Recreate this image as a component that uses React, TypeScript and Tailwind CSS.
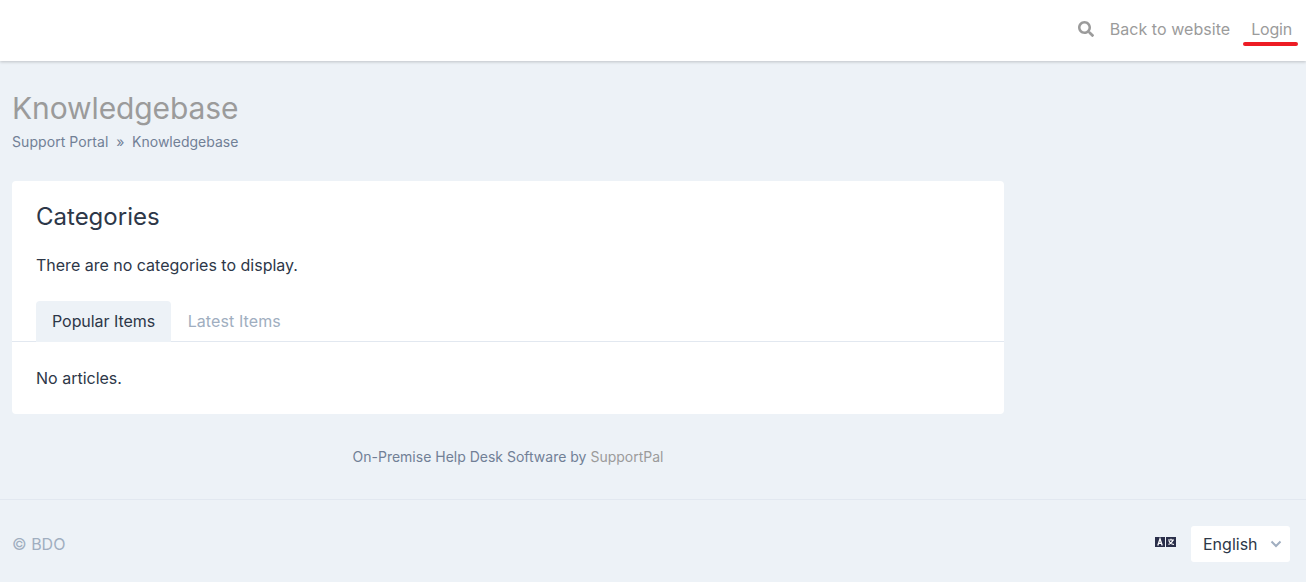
export default function App() {
  return (
    <div className="flex h-[582px] flex-col overflow-hidden bg-[#edf2f7] font-['Inter',sans-serif] text-[16px] text-[#2d3748]">
      <header className="flex h-[61px] flex-none items-center justify-end bg-white pr-[8px] pb-[4px] shadow-[0_1px_3px_rgba(0,0,0,0.2)]">
        <svg width="16" height="16" viewBox="0 0 512 512" fill="#9b9b9b" className="mr-[16px]">
          <path d="M505 442.7 405.3 343c-4.500-4.500-10.600-7-17-7H372c27.600-35.300 44-79.700 44-128C416 93.100 322.900 0 208 0S0 93.100 0 208s93.100 208 208 208c48.300 0 92.700-16.400 128-44v16.300c0 6.400 2.500 12.500 7 17l99.700 99.700c9.400 9.400 24.600 9.400 33.900 0l28.300-28.300c9.400-9.400 9.400-24.600.1-34zM208 336c-70.700 0-128-57.200-128-128 0-70.700 57.200-128 128-128 70.700 0 128 57.200 128 128 0 70.700-57.200 128-128 128z" />
        </svg>
        <a className="mr-[13px] tracking-[0.05px] text-[#9b9b9b]">Back to website</a>
        <a className="relative pr-[6px] pl-[8px] tracking-[-0.2px] text-[#9b9b9b]">
          Login
          <span className="absolute -bottom-[5px] left-0 right-0 h-[4px] rounded-full bg-[#ed1c24]" />
        </a>
      </header>

      <main className="flex-1 px-[12px]">
        <div className="w-[992px]">
          <h1 className="mt-[29px] text-[30px] leading-[36px] font-normal tracking-[-0.1px] text-[#9b9b9b]">Knowledgebase</h1>
          <div className="mt-[5px] flex h-[20px] items-center text-[14px] text-[#718096]">
            <span className="tracking-[0.07px]">Support Portal</span>
            <span className="mx-[7.75px]">»</span>
            <span>Knowledgebase</span>
          </div>

          <section className="mt-[30px] h-[233px] rounded-[4px] bg-white pt-[20px]">
            <h2 className="px-[24px] text-[24px] leading-[32px] font-normal">Categories</h2>
            <p className="mt-[20px] px-[24px] leading-[24px]">There are no categories to display.</p>
            <div className="mt-[24px] flex h-[41px] border-b border-[#e2e8f0] px-[24px]">
              <div className="flex h-[41px] items-center rounded-t-[4px] bg-[#edf2f7] px-[16px] pb-[2px] tracking-[-0.05px]">Popular Items</div>
              <div className="ml-[0.5px] flex h-[41px] items-center px-[16px] pb-[2px] tracking-[0.1px] text-[#a0aec0]">Latest Items</div>
            </div>
            <p className="mt-[24px] px-[24px] leading-[24px]">No articles.</p>
          </section>

          <div className="mt-[33px] text-center text-[14px] leading-[20px] text-[#718096]">
            On-Premise Help Desk Software by <span className="text-[#9b9b9b]">SupportPal</span>
          </div>
        </div>
      </main>

      <footer className="flex h-[83px] flex-none items-center justify-between border-t border-[#e2e8f0] pt-[6px] pr-[16px] pl-[12px]">
        <span className="text-[#a0aec0]">© BDO</span>
        <div className="flex items-center">
          <svg width="21" height="12" viewBox="0 0 21 12" className="mr-[15px] -translate-y-[2px]">
            <rect x="0" y="1" width="10" height="10" fill="#2a2f4a" />
            <rect x="11" y="1" width="10" height="10" fill="#2a2f4a" />
            <path d="M2.800 9.500 5 2.800l2.200 6.700M3.600 7.300h2.800" stroke="#fff" strokeWidth="1.300" fill="none" />
            <path d="M13 4h6M16 2.800v1.200M18 4c-.5 2-2.500 3.500-4.500 4.500M14 5c.5 1.500 2.500 3 5 3.500" stroke="#fff" strokeWidth="1.100" fill="none" />
          </svg>
          <div className="flex h-[36px] w-[99px] items-center justify-between rounded-[3px] bg-white pr-[8px] pl-[12px]">
            <span>English</span>
            <svg width="12" height="12" viewBox="0 0 12 12" fill="none" stroke="#a0aec0" strokeWidth="2">
              <path d="M1.500 3.500 6 8l4.500-4.500" />
            </svg>
          </div>
        </div>
      </footer>
    </div>
  );
}
